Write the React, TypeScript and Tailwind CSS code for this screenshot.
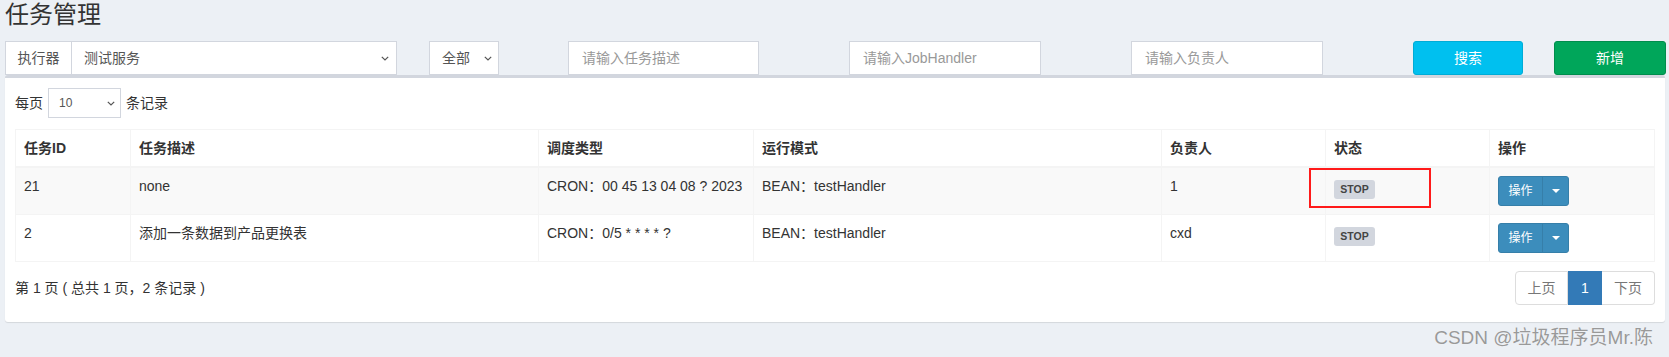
import React from "react";

const Chevron = ({ w = 8, color = "#555" }: { w?: number; color?: string }) => (
  <svg width={w} height={5} viewBox="0 0 8 5" fill="none">
    <polyline points="0.8,0.8 4,4 7.2,0.8" stroke={color} strokeWidth="1.2" fill="none" />
  </svg>
);

const cols = "grid grid-cols-[115px_408px_215px_408px_164px_164px_164px]";

const headers = ["任务ID", "任务描述", "调度类型", "运行模式", "负责人", "状态", "操作"];

const rows = [
  { id: "21", desc: "none", cron: "CRON：00 45 13 04 08 ? 2023", mode: "BEAN：testHandler", author: "1" },
  { id: "2", desc: "添加一条数据到产品更换表", cron: "CRON：0/5 * * * * ?", mode: "BEAN：testHandler", author: "cxd" },
];

const ActionBtn = () => (
  <div className="flex h-[30px] w-[71px] rounded-[3px] border border-[#367fa9] bg-[#3c8dbc] text-white text-[12px]">
    <div className="w-[44px] flex items-center justify-center border-r border-[#367fa9]">操作</div>
    <div className="flex-1 flex items-center justify-center">
      <div className="w-0 h-0 border-t-[4px] border-t-white border-x-[4px] border-x-transparent" />
    </div>
  </div>
);

export default function App() {
  return (
    <div className="relative w-[1669px] h-[357px] overflow-hidden bg-[#ecf0f5] text-[#333] font-['Liberation_Sans','Noto_Sans_CJK_SC',sans-serif] text-[14px]">
      <div className="h-[41px] pl-[5px] text-[24px] leading-[30px] text-[#333]">任务管理</div>

      <div className="flex h-[34px] text-[14px]">
        <div className="ml-[5px] w-[392px] flex">
          <div className="w-[67px] flex items-center justify-center border border-[#d2d6de] bg-white text-[#555]">执行器</div>
          <div className="flex-1 flex items-center justify-between pl-[12px] pr-[7px] border border-l-0 border-[#d2d6de] bg-white text-[#555]">
            <span>测试服务</span>
            <Chevron />
          </div>
        </div>
        <div className="ml-[32px] w-[70px] flex items-center justify-between pl-[12px] pr-[6px] border border-[#d2d6de] bg-white text-[#555]">
          <span>全部</span>
          <Chevron />
        </div>
        <div className="ml-[69px] w-[191px] flex items-center pl-[13px] border border-[#d2d6de] bg-white text-[#999]">请输入任务描述</div>
        <div className="ml-[90px] w-[192px] flex items-center pl-[13px] border border-[#d2d6de] bg-white text-[#999]">请输入JobHandler</div>
        <div className="ml-[90px] w-[192px] flex items-center pl-[13px] border border-[#d2d6de] bg-white text-[#999]">请输入负责人</div>
        <div className="ml-[90px] w-[110px] flex items-center justify-center rounded-[3px] border border-[#00acd6] bg-[#00c0ef] text-white">搜索</div>
        <div className="ml-[31px] w-[112px] flex items-center justify-center rounded-[3px] border border-[#008d4c] bg-[#00a65a] text-white">新增</div>
      </div>

      <div className="ml-[5px] w-[1660px] h-[247px] bg-white border-t-[3px] border-[#d2d6de] rounded-[3px] shadow-[0_1px_1px_rgba(0,0,0,0.1)] px-[10px] pt-[10px]">
        <div className="flex items-center h-[30px]">
          <span>每页</span>
          <div className="ml-[5px] w-[73px] h-[30px] flex items-center justify-between pl-[10px] pr-[5px] border border-[#d2d6de] text-[12px] text-[#555]">
            <span>10</span>
            <Chevron w={8} />
          </div>
          <span className="ml-[5px]">条记录</span>
        </div>

        <div className="mt-[11px] w-[1640px] border border-[#f4f4f4]">
          <div className={`${cols} border-b-2 border-[#f4f4f4]`}>
            {headers.map((h, i) => (
              <div key={h} className={`px-[8px] py-[8px] leading-[20px] font-bold ${i < 6 ? "border-r border-[#f4f4f4]" : ""}`}>
                {h}
              </div>
            ))}
          </div>
          {rows.map((r, ri) => (
            <div key={r.id} className={`${cols} ${ri === 0 ? "bg-[#f9f9f9] border-b border-[#f4f4f4]" : ""}`}>
              <div className="px-[8px] py-[8px] h-[46px] leading-[20px] border-r border-[#f4f4f4]">{r.id}</div>
              <div className="px-[8px] py-[8px] leading-[20px] border-r border-[#f4f4f4]">{r.desc}</div>
              <div className="px-[8px] py-[8px] leading-[20px] border-r border-[#f4f4f4] whitespace-nowrap">{r.cron}</div>
              <div className="px-[8px] py-[8px] leading-[20px] border-r border-[#f4f4f4]">{r.mode}</div>
              <div className="px-[8px] py-[8px] leading-[20px] border-r border-[#f4f4f4]">{r.author}</div>
              <div className="px-[8px] py-[8px] leading-[20px] border-r border-[#f4f4f4]">
                <div className="mt-[4px] w-[41px] h-[19px] rounded-[3px] bg-[#d2d6de] text-[#444] text-[10.5px] font-bold flex items-center justify-center leading-none">
                  STOP
                </div>
              </div>
              <div className="px-[8px] py-[8px]">
                <ActionBtn />
              </div>
            </div>
          ))}
        </div>

        <div className="mt-[9px] flex items-center justify-between h-[34px]">
          <span>第 1 页 ( 总共 1 页，2 条记录 )</span>
          <div className="flex h-[34px] text-[14px]">
            <div className="w-[53px] flex items-center justify-center border border-[#ddd] rounded-l-[4px] text-[#777] bg-white">上页</div>
            <div className="w-[34px] flex items-center justify-center bg-[#337ab7] border border-[#337ab7] text-white">1</div>
            <div className="w-[53px] flex items-center justify-center border border-l-0 border-[#ddd] rounded-r-[4px] text-[#777] bg-white">下页</div>
          </div>
        </div>
      </div>

      <div className="mt-[4px] flex justify-end pr-[16px] text-[19px] leading-[24px] text-[#999] [text-shadow:0_0_1px_rgba(255,255,255,0.8)]">
        CSDN @垃圾程序员Mr.陈
      </div>

      <div className="absolute left-[1309px] top-[168px] w-[122px] h-[40px] border-2 border-[#ff1a1a]" />
    </div>
  );
}
